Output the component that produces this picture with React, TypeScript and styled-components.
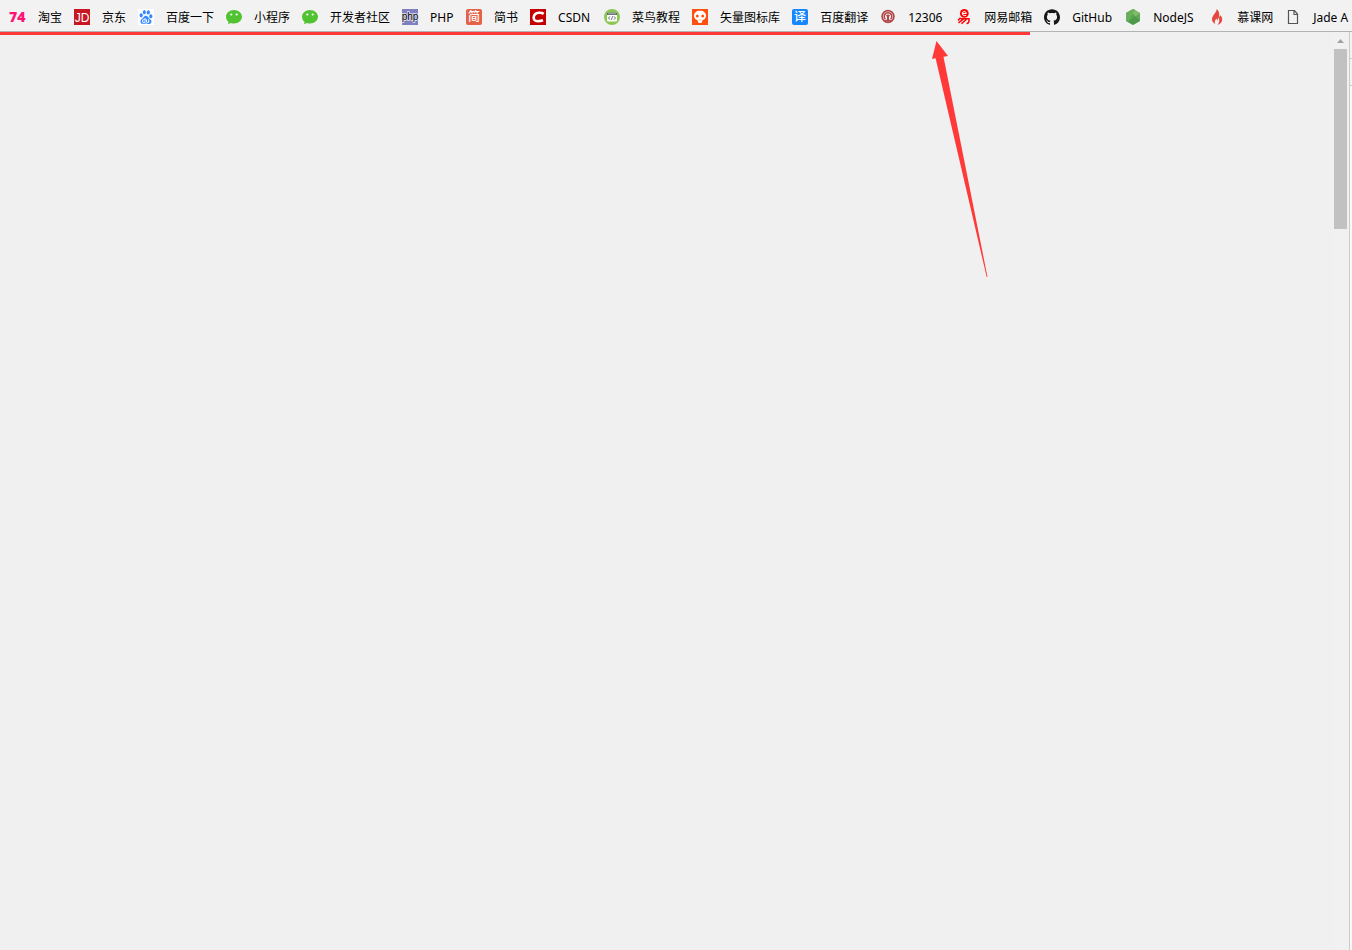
import React from "react";
import styled, { createGlobalStyle } from "styled-components";
import { SiBaidu, SiGithub } from "react-icons/si";

const GlobalStyle = createGlobalStyle`
  * { box-sizing: border-box; }
  body { margin: 0; background: #f0f0f0; }
`;

const Page = styled.div`
  display: flex;
  flex-direction: column;
  min-height: 100vh;
  overflow: hidden;
  font-family: "Noto Sans", "Noto Sans CJK SC", sans-serif;
  font-size: 12px;
  color: #000;
`;

const BookmarkBar = styled.nav`
  display: flex;
  align-items: center;
  gap: 12px;
  height: 32px;
  padding: 3px 0 0 10px;
  overflow: hidden;
  background: #f2f2f2;
  border-bottom: 1px solid #b3b3b3;
`;

const Bookmark = styled.a`
  display: flex;
  flex: none;
  align-items: center;
  gap: 12px;
  color: inherit;
  text-decoration: none;
  white-space: nowrap;
`;

const Icon = styled.span`
  display: block;
  flex: none;
  width: 16px;
  height: 16px;

  svg {
    display: block;
    width: 16px;
    height: 16px;
    overflow: visible;
  }
`;

const Label = styled.span<{ $width?: number }>`
  width: ${({ $width }) => ($width ? `${$width}px` : "auto")};
  padding-top: 2px;
  line-height: 16px;
`;

const Browser = styled.div`
  display: flex;
  flex: 1;
`;

const Viewport = styled.main`
  position: relative;
  flex: 1;
  background: #f0f0f0;
`;

const Progress = styled.div`
  height: 3px;
`;

const ProgressFill = styled.div`
  height: 100%;
  background: #ff3838;
`;

const Arrow = styled.svg`
  position: absolute;
  top: 9px;
  left: 69.9%;
  width: 56px;
  height: 236px;
`;

const ScrollTrack = styled.div`
  display: flex;
  flex-direction: column;
  width: 17px;
  padding-left: 1px;
  background: #f1f1f1;
  border-right: 1px solid #cbcbcb;
`;

const ScrollUp = styled.button`
  display: flex;
  align-items: center;
  justify-content: center;
  width: 13px;
  height: 17px;
  padding: 0;
  border: 0;
  background: transparent;
`;

const ScrollThumb = styled.div`
  width: 13px;
  height: 180px;
  background: #c1c1c1;
`;

const SidePanel = styled.aside`
  width: 2px;
  background: #f8f8f8;
`;

const PanelRow = styled.div`
  height: 27px;
  background: #f3f3f3;
  border-bottom: 1px solid #cbcbcb;
`;

const Taobao = () => (
  <svg viewBox="0 0 16 16">
    <text x="-1" y="13" fontFamily="Open Sans" fontWeight="800" fontSize="14" fill="#ff1478">74</text>
  </svg>
);

const Jingdong = () => (
  <svg viewBox="0 0 16 16">
    <rect width="16" height="16" fill="#c81623" />
    <text x="8" y="13" textAnchor="middle" fontFamily="Liberation Sans" fontSize="12" fill="#fff">JD</text>
  </svg>
);

const Baidu = () => (
  <svg viewBox="0 0 16 16">
    <rect width="16" height="16" fill="#fff" />
    <SiBaidu x="1" y="1" style={{ width: 14, height: 14 }} color="#3388ff" />
  </svg>
);

const Wechat = () => (
  <svg viewBox="0 0 16 16">
    <path d="M8 1C3.500 1 0 4 0 7.800c0 2.200 1.100 4 2.600 5.200L2 15.200l2.900-1.200c1 .4 2 .5 3.100.5 4.500 0 8-3 8-6.700S12.500 1 8 1z" fill="#51c332" />
    <circle cx="5.300" cy="5.500" r="1.100" fill="#fff" />
    <circle cx="10.700" cy="5.500" r="1.100" fill="#fff" />
  </svg>
);

const Php = () => (
  <svg viewBox="0 0 16 16">
    <rect width="16" height="16" fill="#7f7fbf" />
    <text x="8" y="11" textAnchor="middle" fontFamily="Liberation Sans" fontSize="10" fill="#000" stroke="#e8e8f6" strokeWidth="1.5" paintOrder="stroke">php</text>
  </svg>
);

const Jianshu = () => (
  <svg viewBox="0 0 16 16">
    <rect width="16" height="16" rx="2" fill="#e4624a" />
    <text x="8" y="12" textAnchor="middle" fontFamily="Noto Sans CJK SC" fontWeight="500" fontSize="12" fill="#fff">简</text>
  </svg>
);

const Csdn = () => (
  <svg viewBox="0 0 16 16">
    <rect width="16" height="16" fill="#c40000" />
    <path d="M13.700 4.800C12.500 4 11 3.700 9 3.800 5.800 4 4 5.900 3.700 8.300c-.3 2.400 1.200 3.900 4.100 3.900 2.200 0 3.600-.3 5.200-.9" fill="none" stroke="#fff" strokeWidth="2.600" />
  </svg>
);

const Runoob = () => (
  <svg viewBox="0 0 16 16">
    <circle cx="8" cy="8" r="8" fill="#8cc653" />
    <rect x="3" y="3.500" width="10" height="9" rx="1" fill="#fff" />
    <path d="M3 6V4.500q0-1 1-1h8q1 0 1 1V6z" fill="#53645b" />
    <path d="M4 4.800h8" stroke="#d5ddd7" strokeWidth=".7" />
    <path d="M6 7.300 4.500 9 6 10.700M10 7.300 11.500 9 10 10.700M8.700 7.200l-1.400 3.600" fill="none" stroke="#53645b" strokeWidth=".9" />
  </svg>
);

const Iconfont = () => (
  <svg viewBox="0 0 16 16">
    <rect width="16" height="16" fill="#ff5010" />
    <path d="M8 1.800C4.300 1.800 2 3.900 2 6.800c0 2.300 1.500 3.900 3.600 4.500l.5 2.100q1.900 1.400 3.800 0l.5-2.100C12.500 10.700 14 9.100 14 6.800c0-2.900-2.300-5-6-5z" fill="#fff" />
    <ellipse cx="5.300" cy="7" rx="1.400" ry="1.600" fill="#ff5010" />
    <ellipse cx="10.700" cy="7" rx="1.400" ry="1.600" fill="#ff5010" />
    <path d="m7 11.300 1-1 1 1z" fill="#ff5010" />
  </svg>
);

const Translate = () => (
  <svg viewBox="0 0 16 16">
    <rect width="16" height="16" rx="2" fill="#1687ff" />
    <text x="8" y="12" textAnchor="middle" fontFamily="Noto Sans CJK SC" fontWeight="500" fontSize="12" fill="#fff">译</text>
  </svg>
);

const Railway = () => (
  <svg viewBox="0 0 16 16">
    <circle cx="8" cy="7.500" r="5.900" fill="none" stroke="#b04a4a" strokeWidth="1.700" />
    <path d="M5.400 10.300a3.800 3.800 0 1 1 5.200 0" fill="none" stroke="#b04a4a" strokeWidth="1.500" />
    <path d="M6 6.300q2-1.600 4 0L9 8v2.500l2 .8v1.200H5v-1.200l2-.8V8z" fill="#b04a4a" />
  </svg>
);

const Netease = () => (
  <svg viewBox="0 0 16 16">
    <circle cx="8.300" cy="4.400" r="4.400" fill="#f00" />
    <path d="M6.300 4.500h4q0-2-2-2t-2 2q0 2 2 2h1.800" fill="none" stroke="#fff" strokeWidth="1" />
    <path d="M4.500 8.800 2 11.500M4.500 9.800H13q.5 4.700-2.500 4.700M7.500 10l-5 3.800M10.500 10.200 5.500 14.800" fill="none" stroke="#f00" strokeWidth="1.500" />
  </svg>
);

const Github = () => <SiGithub color="#181616" />;

const Node = () => (
  <svg viewBox="0 0 16 16">
    <path d="m8 0 7 4v8l-7 4-7-4V4z" fill="#55a54c" />
    <path d="m8 0 7 4v8L5 2z" fill="#83bc68" />
    <path d="M1 4 8 0l2 1-7 12-2-1z" fill="#6aaf5d" />
    <path d="m15 4-12 9 5 3 7-4z" fill="#438f48" opacity=".5" />
  </svg>
);

const Imooc = () => (
  <svg viewBox="0 0 16 16">
    <path d="M7.600 0c.6 3-4.600 6.300-4.600 10.300 0 2 1.200 3.800 3.200 4.700-1-2.600 0-4.200 1.400-5.500.4 1 .2 1.600 1 2 .5-1 .2-2 .6-3 1.400 1.800 1.700 4.400-.7 7.500 3.200-1 4.700-3.200 4.700-5.500 0-1.900-.8-3.200-2-4.200-.1 1-.4 1.600-1 2C10.600 5.500 10.300 2 7.600 0z" fill="#e5483f" />
  </svg>
);

const Blank = () => (
  <svg viewBox="0 0 16 16">
    <path d="M3.500 1.500h6l3 3.500v9.500h-9zM9 2v3.500h3.500" fill="none" stroke="#555" strokeWidth="1.200" />
  </svg>
);

const bookmarks: { label: string; icon: React.FC; width?: number }[] = [
  { label: "淘宝", icon: Taobao },
  { label: "京东", icon: Jingdong },
  { label: "百度一下", icon: Baidu },
  { label: "小程序", icon: Wechat },
  { label: "开发者社区", icon: Wechat },
  { label: "PHP", icon: Php, width: 24 },
  { label: "简书", icon: Jianshu },
  { label: "CSDN", icon: Csdn, width: 34 },
  { label: "菜鸟教程", icon: Runoob },
  { label: "矢量图标库", icon: Iconfont },
  { label: "百度翻译", icon: Translate },
  { label: "12306", icon: Railway, width: 36 },
  { label: "网易邮箱", icon: Netease },
  { label: "GitHub", icon: Github, width: 41 },
  { label: "NodeJS", icon: Node, width: 44 },
  { label: "慕课网", icon: Imooc },
  { label: "Jade A", icon: Blank },
];

export default function App() {
  const progress = 77.3;
  return (
    <Page>
      <GlobalStyle />
      <BookmarkBar aria-label="Bookmarks">
        {bookmarks.map(({ label, icon: Glyph, width }) => (
          <Bookmark key={label} href="#">
            <Icon aria-hidden="true"><Glyph /></Icon>
            <Label $width={width}>{label}</Label>
          </Bookmark>
        ))}
      </BookmarkBar>
      <Browser>
        <Viewport>
          <Progress role="progressbar" aria-label="Page loading" aria-valuenow={progress} aria-valuemin={0} aria-valuemax={100}>
            <ProgressFill style={{ width: `${progress}%` }} />
          </Progress>
          <Arrow viewBox="0 0 56 236" aria-hidden="true">
            <path d="M4.500 0 16 15l-4.500.8L55.500 236h-.8L3.600 17.300l-3.600.7z" fill="#ff3838" />
          </Arrow>
        </Viewport>
        <ScrollTrack>
          <ScrollUp aria-label="Scroll up">
            <svg width="7" height="4" viewBox="0 0 7 4"><path d="M3.500 0 7 4H0z" fill="#a3a3a3" /></svg>
          </ScrollUp>
          <ScrollThumb />
        </ScrollTrack>
        <SidePanel>
          <PanelRow />
          <PanelRow />
        </SidePanel>
      </Browser>
    </Page>
  );
}
